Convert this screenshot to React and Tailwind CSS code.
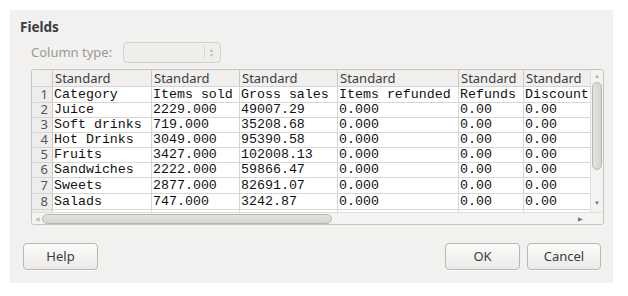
import React from 'react';

const cols = [
  { w: 99, title: 'Category' },
  { w: 88, title: 'Items sold' },
  { w: 98, title: 'Gross sales' },
  { w: 121, title: 'Items refunded' },
  { w: 65, title: 'Refunds' },
  { w: 120, title: 'Discounts' },
];

// rows of the imported sheet
const rows = [
  ['Category', 'Items sold', 'Gross sales', 'Items refunded', 'Refunds', 'Discounts'],
  ['Juice', '2229.000', '49007.29', '0.000', '0.00', '0.00'],
  ['Soft drinks', '719.000', '35208.68', '0.000', '0.00', '0.00'],
  ['Hot Drinks', '3049.000', '95390.58', '0.000', '0.00', '0.00'],
  ['Fruits', '3427.000', '102008.13', '0.000', '0.00', '0.00'],
  ['Sandwiches', '2222.000', '59866.47', '0.000', '0.00', '0.00'],
  ['Sweets', '2877.000', '82691.07', '0.000', '0.00', '0.00'],
  ['Salads', '747.000', '3242.87', '0.000', '0.00', '0.00'],
  ['Meals', '2.000', '30.00', '0.000', '0.00', '0.00'],
];

// row heights alternate a little, as in the spreadsheet grid
const rowH = ['h-[16px]', 'h-[15px]', 'h-[15px]', 'h-[15px]', 'h-[15px]', 'h-[15px]', 'h-[16px]', 'h-[16px]', 'h-[16px]'];

const sans = { fontFamily: '"Noto Sans", "Open Sans", sans-serif' };
const mono = { fontFamily: '"Liberation Mono", monospace' };

const Button = ({ children, className = '' }) => (
  <button
    className={`h-[27px] rounded-[4px] border border-[#b8b6b2] bg-gradient-to-b from-[#fbfbfa] to-[#ebeae8] text-[13px] text-[#3c3c3c] shadow-[0_1px_0_rgba(255,255,255,0.8)] ${className}`}
    style={sans}
  >
    {children}
  </button>
);

const App = () => {
  return (
    <div className="w-[628px] h-[296px] bg-white pl-[10px] pt-[10px]">
      <div className="w-[603px] h-[273px] bg-[#f2f1f0] relative" style={sans}>
        {/* Fields */}
        <div className="pl-[10px] pt-[8px] text-[13.5px] font-bold text-[#3c3c3c] leading-[19px]">Fields</div>

        {/* Column type */}
        <div className="flex items-center pl-[21px] mt-[5px] h-[21px]">
          <span className="text-[13px] text-[#9a9895] w-[92px]">Column type:</span>
          <div className="w-[98px] h-[21px] rounded-[4px] border border-[#d3d1cd] bg-[#efeeec] flex justify-end items-center pr-[6px]">
            <div className="h-[13px] border-l border-[#d8d6d2] pl-[4px] flex flex-col items-center justify-center">
              <span className="text-[5px] text-[#b8b6b2] leading-[5px]">▲</span>
              <span className="text-[5px] text-[#b8b6b2] leading-[5px]">▼</span>
            </div>
          </div>
        </div>

        {/* Table */}
        <div className="ml-[21px] mt-[6px] w-[573px] h-[156px] border border-[#c6c4c0] rounded-[3px] bg-[#f6f6f5] flex flex-col overflow-hidden">
          <div className="flex h-[142px]">
            <div className="w-[559px] h-[142px] overflow-hidden bg-white">
              {/* header */}
              <div className="flex h-[17px] bg-[#f0efed] border-b border-[#d5d3cf]">
                <div className="w-[21px] shrink-0 border-r border-[#c9c7c3]" />
                {cols.map((c, i) => (
                  <div
                    key={i}
                    className="shrink-0 border-r border-[#c9c7c3] pl-[2px] text-[13px] leading-[17px] text-[#3c3c3c] overflow-hidden whitespace-nowrap"
                    style={{ width: c.w }}
                  >
                    Standard
                  </div>
                ))}
              </div>
              {rows.map((r, ri) => (
                <div key={ri} className={`flex ${rowH[ri]} border-b border-[#d6d6d6]`}>
                  <div className="w-[21px] shrink-0 bg-[#eeedeb] border-r border-[#c9c7c3] flex items-center justify-end pr-[4px] text-[13px] text-[#555]">
                    {ri + 1}
                  </div>
                  {r.map((v, ci) => (
                    <div
                      key={ci}
                      className="shrink-0 border-r border-[#d6d6d6] pl-[1px] flex items-center text-[13.3px] text-[#111] overflow-hidden whitespace-nowrap"
                      style={{ ...mono, width: cols[ci].w }}
                    >
                      {v}
                    </div>
                  ))}
                </div>
              ))}
            </div>
            {/* vertical scrollbar */}
            <div className="w-[13px] h-[142px] bg-[#f4f3f2] border-l border-[#e0dedb] flex flex-col items-center">
              <span className="text-[6px] text-[#b0aeaa] leading-[6px] mt-[3px]">▲</span>
              <div className="mt-[3px] w-[10px] h-[88px] rounded-[5px] border border-[#b9b7b3] bg-gradient-to-r from-[#e4e2df] to-[#d6d4d0]" />
              <div className="flex-1" />
              <span className="text-[6px] text-[#7a7874] leading-[6px] mb-[6px]">▼</span>
            </div>
          </div>
          {/* horizontal scrollbar */}
          <div className="flex h-[12px] border-t border-[#e0dedb]">
            <div className="w-[559px] flex items-center bg-[#f4f3f2]">
              <span className="text-[6px] text-[#c0beba] leading-[6px] ml-[3px]">◀</span>
              <div className="ml-[2px] h-[10px] w-[290px] rounded-[5px] border border-[#b9b7b3] bg-gradient-to-b from-[#e4e2df] to-[#d6d4d0]" />
              <div className="flex-1" />
              <span className="text-[6px] text-[#7a7874] leading-[6px] mr-[7px]">▶</span>
            </div>
            <div className="w-[13px] bg-[#f4f3f2]" />
          </div>
        </div>

        {/* Buttons */}
        <div className="flex items-center mt-[18px] pl-[13px] pr-[12px]">
          <Button className="w-[75px]">Help</Button>
          <div className="flex-1" />
          <Button className="w-[75px]">OK</Button>
          <Button className="w-[74px] ml-[7px]">Cancel</Button>
        </div>
      </div>
    </div>
  );
};

export default App;
